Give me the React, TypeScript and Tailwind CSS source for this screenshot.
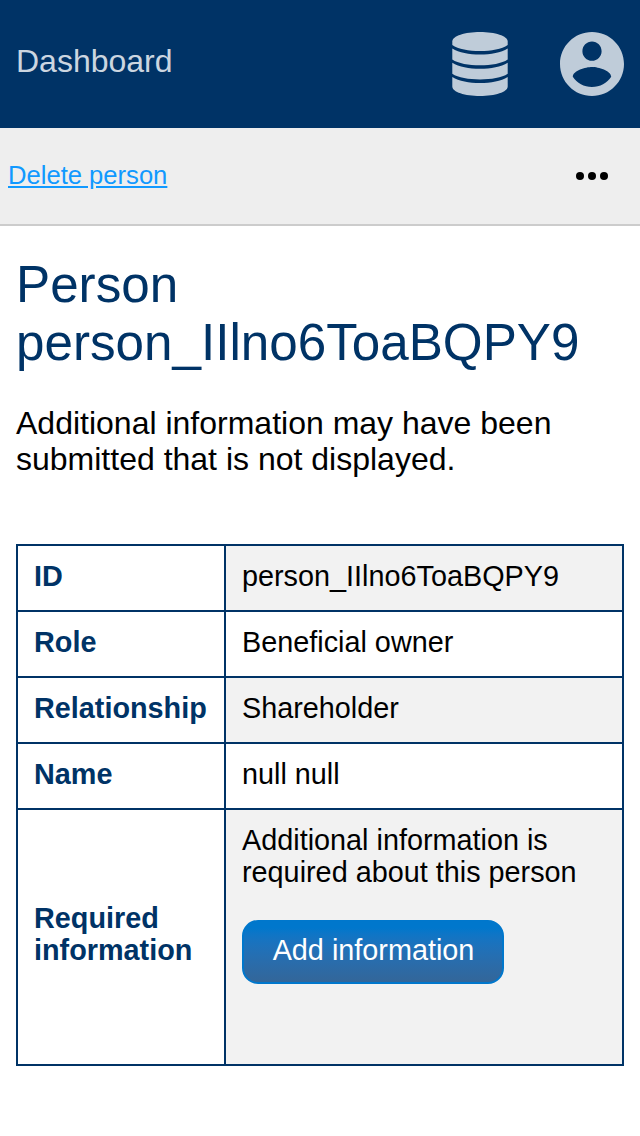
import React from "react";

const rows = [
  { label: "ID", value: "person_IIlno6ToaBQPY9", shaded: true },
  { label: "Role", value: "Beneficial owner", shaded: false },
  { label: "Relationship", value: "Shareholder", shaded: true },
  { label: "Name", value: "null null", shaded: false },
];

function DatabaseIcon() {
  return (
    <svg viewBox="0 0 56 64" className="h-16 w-14" fill="currentColor">
      <path d="M28 0C43 0 55.7 4 55.7 9.5V13C50 17 39 19 28 19S6 17 .3 13V9.5C.3 4 13 0 28 0Z" />
      <path d="M.3 16.4C7 20.7 17 22.4 28 22.4S49 20.7 55.7 16.4V27.4C50 31.4 39 33.2 28 33.2S6 31.4 .3 27.4Z" />
      <path d="M.3 30.8C7 35.1 17 36.8 28 36.8S49 35.1 55.7 30.8V41.8C50 45.8 39 47.5 28 47.5S6 45.8 .3 41.8Z" />
      <path d="M.3 45.1C7 49.4 17 51.1 28 51.1S49 49.4 55.7 45.1V54.5C55.7 60 43 64 28 64S.3 60 .3 54.5Z" />
    </svg>
  );
}

function AccountIcon() {
  return (
    <svg viewBox="2 2 20 20" className="size-16" fill="currentColor">
      <path d="M12 2C6.48 2 2 6.48 2 12s4.48 10 10 10 10-4.48 10-10S17.52 2 12 2zm0 3c1.66 0 3 1.34 3 3s-1.34 3-3 3-3-1.34-3-3 1.34-3 3-3zm0 14.2c-2.5 0-4.71-1.28-6-3.22.03-1.99 4-3.08 6-3.08 1.99 0 5.97 1.09 6 3.08-1.29 1.94-3.5 3.22-6 3.22z" />
    </svg>
  );
}

export default function App() {
  return (
    <div className="min-h-[1136px] w-[640px] bg-white font-['Liberation_Sans',Arial,sans-serif] text-black">
      <header className="flex h-32 items-center justify-between bg-[#003366] px-4 text-[#bfccd9]">
        <span className="mb-1.5 text-[32px] leading-9 text-[#ccd6e0]">Dashboard</span>
        <div className="flex items-center gap-[52px]">
          <DatabaseIcon />
          <AccountIcon />
        </div>
      </header>
      <nav className="flex h-[98px] items-center justify-between border-b-2 border-[#cccccc] bg-[#eeeeee] pl-2 pr-8">
        <a href="#" className="mb-0.5 text-[25.6px] leading-[30px] text-[#1199ff] underline">Delete person</a>
        <button aria-label="More" className="flex gap-1">
          <span className="size-2 rounded-full bg-black" />
          <span className="size-2 rounded-full bg-black" />
          <span className="size-2 rounded-full bg-black" />
        </button>
      </nav>
      <main className="px-4 pt-[30px]">
        <h1 className="text-[51.2px] leading-[58px] text-[#003366]">Person person_IIlno6ToaBQPY9</h1>
        <p className="mt-[33px] text-[32px] leading-9">Additional information may have been submitted that is not displayed.</p>
        <table className="mt-[67px] w-[608px] table-fixed border-collapse text-[28.8px] leading-8">
          <colgroup>
            <col className="w-[208px]" />
            <col />
          </colgroup>
          <tbody>
            {rows.map((row) => (
              <tr key={row.label} className="h-[66px]">
                <th className="border-2 border-[#003366] px-4 pb-[18px] pt-3.5 text-left font-bold text-[#003366]">{row.label}</th>
                <td className={row.shaded ? "border-2 border-[#003366] bg-[#f2f2f2] px-4 pb-[18px] pt-3.5" : "border-2 border-[#003366] px-4 pb-[18px] pt-3.5"}>{row.value}</td>
              </tr>
            ))}
            <tr className="h-64">
              <th className="border-2 border-[#003366] px-4 pb-[23px] pt-4 text-left font-bold text-[#003366]">Required information</th>
              <td className="border-2 border-[#003366] bg-[#f2f2f2] px-4 pt-3.5 align-top">
                <p>Additional information is required about this person</p>
                <button className="mt-8 block h-16 w-[262px] rounded-2xl border-2 border-[#0077cc] bg-linear-to-b from-[#0077cc] from-10% to-[#336699] pb-1 pl-px text-white">Add information</button>
              </td>
            </tr>
          </tbody>
        </table>
      </main>
    </div>
  );
}
